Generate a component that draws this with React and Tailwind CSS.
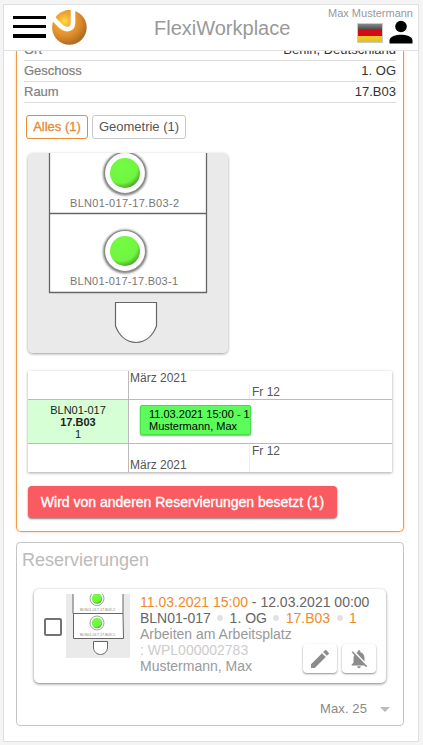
import React from "react";
import { MdEdit, MdNotificationsOff, MdArrowDropDown } from "react-icons/md";

function Logo() {
  return (
    <svg width="36" height="36" viewBox="0 0 36 36" className="block">
      <defs>
        <radialGradient id="logoFill" cx="0.36" cy="0.32" r="0.7">
          <stop offset="0" stopColor="#fbdc45" />
          <stop offset="0.3" stopColor="#f3a62f" />
          <stop offset="0.65" stopColor="#dc8b2b" />
          <stop offset="1" stopColor="#ad6a24" />
        </radialGradient>
      </defs>
      <circle cx="17.400" cy="17.400" r="17.300" fill="url(#logoFill)" />
      <path d="M0 6.500C3.500 11 7 15 10.500 17.500C16.500 21 21 18.500 21 12.500V-1" fill="none" stroke="#fff" strokeWidth="4.600" />
    </svg>
  );
}

function Seat({ x, y }) {
  return (
    <g>
      <circle cx={x} cy={y + 0.5} r="22" fill="#555" filter="url(#soft)" opacity="0.75" />
      <circle cx={x} cy={y} r="20.500" fill="#fff" stroke="#8a8a8a" strokeWidth="1.200" />
      <circle cx={x} cy={y} r="15" fill="url(#ball)" />
    </g>
  );
}

function FloorPlan() {
  return (
    <svg width="200" height="200" viewBox="0 0 200 200" className="block rounded-[5px]">
      <defs>
        <radialGradient id="ball" cx="0.38" cy="0.3" r="0.78">
          <stop offset="0" stopColor="#74fb42" />
          <stop offset="0.68" stopColor="#70f640" />
          <stop offset="1" stopColor="#3f9220" />
        </radialGradient>
        <filter id="soft" x="-20%" y="-20%" width="140%" height="140%">
          <feGaussianBlur stdDeviation="1.200" />
        </filter>
      </defs>
      <rect width="200" height="200" fill="#eaeaea" />
      <path d="M21.500 -5V139.500H178.500V-5Z" fill="#fff" stroke="#666" strokeWidth="1.300" />
      <path d="M21.500 60.500H178.500" stroke="#666" strokeWidth="1.300" />
      <Seat x={97} y={20} />
      <Seat x={97} y={98} />
      <path d="M87.500 149.500H128.500V173C125 182 118 189.500 108 189.500C98 189.500 91 182 87.500 173Z" fill="#fff" stroke="#666" strokeWidth="1.200" />
      <g fill="#777" fontFamily="Liberation Sans, Arial, sans-serif" fontSize="11">
        <text x="42" y="54" textLength="109">BLN01-017-17.B03-2</text>
        <text x="42" y="132" textLength="108">BLN01-017-17.B03-1</text>
      </g>
    </svg>
  );
}

function FloorThumb() {
  return (
    <svg width="64" height="64" viewBox="0 0 64 64" className="block">
      <rect width="64" height="64" fill="#eaeaea" />
      <path d="M7 -2V19.500H57V-2Z" fill="#fff" stroke="#666" />
      <path d="M7.500 19.500H57L57.500 44.500H7.500Z" fill="#fff" stroke="#666" />
      <g stroke="#888" strokeWidth="0.800" fill="#fff">
        <circle cx="31" cy="4.500" r="7" />
        <circle cx="31" cy="29" r="7" />
      </g>
      <circle cx="31" cy="4.500" r="5.200" fill="url(#ball)" />
      <circle cx="31" cy="29" r="5.200" fill="url(#ball)" />
      <path d="M27.500 47.500H41.500V54C41 58 38 60.500 34.500 60.500C31 60.500 28 58 27.500 54Z" fill="#fff" stroke="#666" />
      <g fill="#888" fontFamily="Liberation Sans, Arial, sans-serif" fontSize="3.800">
        <text x="14" y="17" textLength="35">BLN01-017-17.B03-2</text>
        <text x="14" y="42" textLength="35">BLN01-017-17.B03-1</text>
      </g>
    </svg>
  );
}

function InfoRow({ label, value }) {
  return (
    <div className="flex h-[21px] items-center justify-between border-b border-[#dcdcdc] text-[13px]">
      <span className="text-[#808080] [-webkit-text-stroke:0.2px]">{label}</span>
      <span className="text-[#333]">{value}</span>
    </div>
  );
}

function Dot() {
  return <span className="size-[6px] rounded-full bg-[#e2e2e2]" />;
}

export default function App() {
  return (
    <div className="h-[745px] w-[423px] overflow-hidden bg-[#f4f4f4] pl-[3px] pt-1 font-['Liberation_Sans',Arial,sans-serif]">
      <div className="flex h-[738px] w-[416px] flex-col overflow-hidden border border-[#e0e0e0] bg-white">
        <header className="flex h-[46px] shrink-0 border-b border-[#e0e0e0]">
          <div className="ml-[9px] mt-[11px] flex h-[22px] w-[33px] flex-col justify-between">
            <i className="h-[3px] bg-black" />
            <i className="h-[3px] bg-black" />
            <i className="h-1 bg-black" />
          </div>
          <div className="ml-[6px] mt-[5px] w-[36px]">
            <Logo />
          </div>
          <h1 className="ml-[66px] mt-[8px] w-[140px] text-[20px] leading-[30px] text-[#999]">FlexiWorkplace</h1>
          <div className="ml-auto mr-[5px] flex flex-col items-end">
            <span className="mt-[2px] whitespace-nowrap text-[11px] leading-[12px] text-[#999]">Max Mustermann</span>
            <div className="flex">
              <div className="mr-[6px] mt-[4px] h-[20px] w-[26px] border border-[#ccc] bg-[linear-gradient(180deg,#888_0%,#444_34%,#d20b16_34%,#d20b16_66%,#f1cf32_66%,#e5bd20_100%)]" />
              <div className="mt-px h-[24px] w-[24px]">
                <svg width="24" height="24" viewBox="0 0 24 24" className="block">
                  <circle cx="12" cy="6.500" r="5.800" fill="#000" />
                  <path d="M.5 23.500V20.500C.5 16.500 7 14.800 12 14.800S23.500 16.500 23.500 20.500V23.500Z" fill="#000" />
                </svg>
              </div>
            </div>
          </div>
        </header>

        <main className="flex min-h-0 flex-1 flex-col overflow-hidden pl-3 pr-[14px]">
          <section className="h-[481px] shrink-0 rounded-b-[5px] border border-t-0 border-[#f09a48] px-[7px] shadow-[0_0_3px_rgba(240,154,72,0.5)]">
            <div className="-mt-[11px]">
              <InfoRow label="Ort" value="Berlin, Deutschland" />
              <InfoRow label="Geschoss" value="1. OG" />
              <InfoRow label="Raum" value="17.B03" />
            </div>
            <div className="ml-[2px] mt-[12px] flex gap-1 text-[13px]">
              <button className="h-6 w-[62px] rounded-[3px] border border-[#e98b35] text-[#e98b35] [-webkit-text-stroke:0.35px]">Alles (1)</button>
              <button className="h-6 w-[94px] rounded-[3px] border border-[#c8c8c8] text-[#555]">Geometrie (1)</button>
            </div>
            <div className="ml-[4px] mt-[14px] size-[200px] rounded-[5px] shadow-[0_1px_3px_rgba(0,0,0,0.4)]">
              <FloorPlan />
            </div>

            <div className="ml-[4px] mt-[18px] flex h-[101px] w-[364px] flex-col text-[12px] leading-[14px] text-[#555] shadow-[0_1px_3px_rgba(0,0,0,0.35)]">
              <div className="flex h-[29px] border-b border-[#bbb]">
                <div className="w-[101px] border-r border-[#bbb]" />
                <div className="w-[120px] pl-px">März 2021</div>
                <div className="mt-[14px] flex-1 border-l border-[#eee] pl-[2px]">Fr 12</div>
              </div>
              <div className="flex h-[44px] border-b border-[#bbb] text-[11px] leading-[12px] text-[#222]">
                <div className="w-[101px] border-r border-[#bbb] bg-[#d6ffd6] pt-[4px] text-center">
                  <div>BLN01-017</div>
                  <b className="block">17.B03</b>
                  <div>1</div>
                </div>
                <div className="ml-[11px] mt-[5px] h-[30px] w-[111px] overflow-hidden whitespace-nowrap rounded-[2px] border border-[#4bdc4b] bg-[#5cfc5c] pl-[8px] pt-[2px] text-black shadow-[0_1px_2px_rgba(0,0,0,0.4)]">
                  <div>11.03.2021 15:00 - 12.03.2021</div>
                  <div>Mustermann, Max</div>
                </div>
              </div>
              <div className="flex flex-1">
                <div className="w-[101px] border-r border-[#bbb]" />
                <div className="w-[120px] pl-px pt-[14px]">März 2021</div>
                <div className="flex-1 border-l border-[#eee] pl-[2px]">Fr 12</div>
              </div>
            </div>

            <button className="ml-[4px] mt-[14px] block h-8 w-[309px] whitespace-nowrap rounded-[4px] bg-[#fa5b60] text-[14px] text-white shadow-[0_1px_2px_rgba(0,0,0,0.5)] [-webkit-text-stroke:0.35px]">
              Wird von anderen Reservierungen besetzt (1)
            </button>
          </section>

          <section className="mt-[10px] h-[184px] shrink-0 rounded-[4px] border border-[#c4c4c4]">
            <h2 className="ml-[5px] mt-[7px] text-[18px] leading-[20px] text-[#bbb]">Reservierungen</h2>
            <article className="ml-[17px] mt-[19px] flex h-[94px] w-[352px] rounded-[5px] shadow-[0_1px_3px_rgba(0,0,0,0.5)]">
              <div className="ml-[10px] mt-[29px] size-[18px] rounded-[2px] border-2 border-[#737373]" />
              <div className="ml-1 mt-[5px]">
                <FloorThumb />
              </div>
              <div className="ml-[10px] mt-[5px] flex-1 whitespace-nowrap text-[14px] leading-4 text-[#999]">
                <div className="text-[#666]">
                  <span className="text-[#ed8b2d]">11.03.2021 15:00</span> - 12.03.2021 00:00
                </div>
                <div className="flex items-center gap-[6.4px] text-[#666]">
                  <span>BLN01-017</span>
                  <Dot />
                  <span>1. OG</span>
                  <Dot />
                  <span className="text-[#ed8b2d]">17.B03</span>
                  <Dot />
                  <span className="text-[#ed8b2d]">1</span>
                </div>
                <div>Arbeiten am Arbeitsplatz</div>
                <div className="flex h-8 justify-between">
                  <div>
                    <div className="text-[#ccc]">: WPL000002783</div>
                    <div>Mustermann, Max</div>
                  </div>
                  <div className="mr-[10px] mt-[2px] flex gap-[5px] text-[#8c8c8c]">
                    <button className="flex h-[29px] w-[34px] items-center justify-center rounded-[4px] bg-white shadow-[0_1px_2px_rgba(0,0,0,0.45)]">
                      <MdEdit size={24} />
                    </button>
                    <button className="flex h-[29px] w-[34px] items-center justify-center rounded-[4px] bg-white shadow-[0_1px_2px_rgba(0,0,0,0.45)]">
                      <MdNotificationsOff size={22} />
                    </button>
                  </div>
                </div>
              </div>
            </article>
            <div className="mr-[6px] mt-[14px] flex h-6 items-center justify-end text-[13px] text-[#888]">
              <span className="mr-[6px] tracking-[0.1px]">Max. 25</span>
              <MdArrowDropDown size={24} className="text-[#bbb]" />
            </div>
          </section>
        </main>
      </div>
    </div>
  );
}
